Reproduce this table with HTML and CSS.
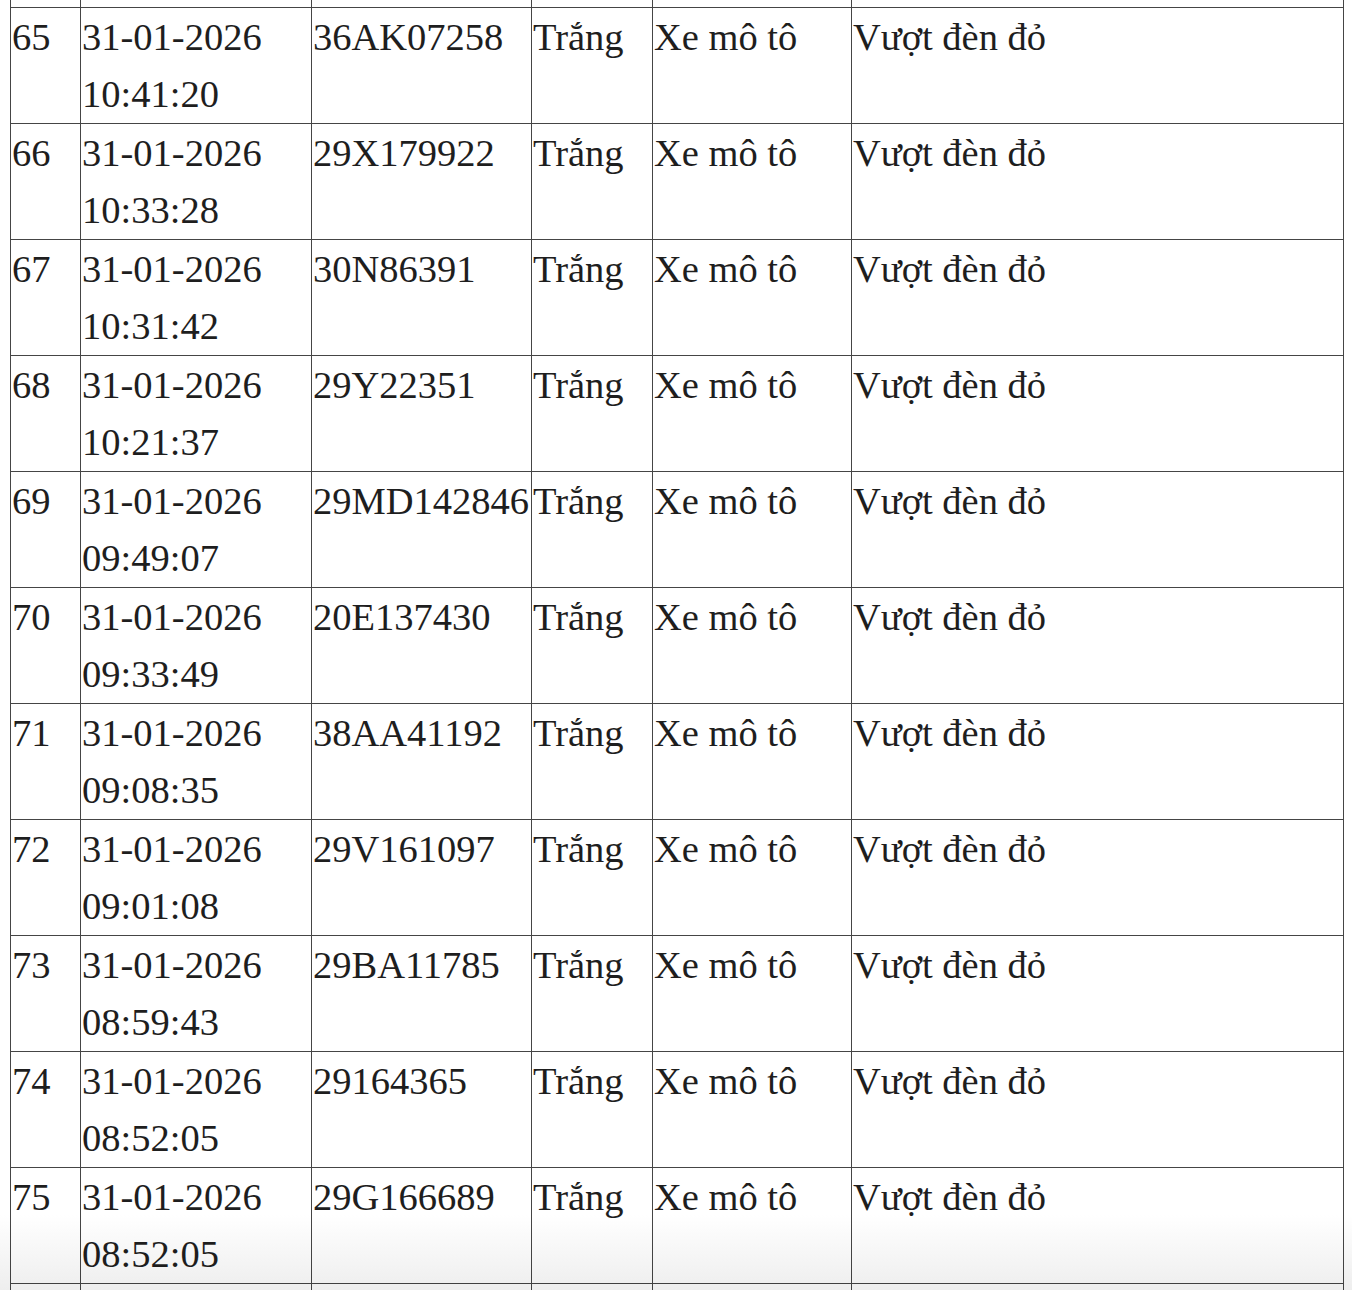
FILE: index.html
```html
<!DOCTYPE html>
<html lang="vi">
<head>
<meta charset="utf-8">
<title>Danh sách vi phạm</title>
<link rel="stylesheet" href="styles.css">
</head>
<body>
<table class="grid">
<colgroup>
<col class="c-no"><col class="c-time"><col class="c-plate"><col class="c-color"><col class="c-type"><col class="c-err">
</colgroup>
<tbody>
<tr class="cut"><td></td><td></td><td></td><td></td><td></td><td></td></tr>
<tr><td><div class="t">65</div></td><td><div class="t">31-01-2026 10:41:20</div></td><td><div class="t">36AK07258</div></td><td><div class="t">Trắng</div></td><td><div class="t">Xe mô tô</div></td><td><div class="t">Vượt đèn đỏ</div></td></tr>
<tr><td><div class="t">66</div></td><td><div class="t">31-01-2026 10:33:28</div></td><td><div class="t">29X179922</div></td><td><div class="t">Trắng</div></td><td><div class="t">Xe mô tô</div></td><td><div class="t">Vượt đèn đỏ</div></td></tr>
<tr><td><div class="t">67</div></td><td><div class="t">31-01-2026 10:31:42</div></td><td><div class="t">30N86391</div></td><td><div class="t">Trắng</div></td><td><div class="t">Xe mô tô</div></td><td><div class="t">Vượt đèn đỏ</div></td></tr>
<tr><td><div class="t">68</div></td><td><div class="t">31-01-2026 10:21:37</div></td><td><div class="t">29Y22351</div></td><td><div class="t">Trắng</div></td><td><div class="t">Xe mô tô</div></td><td><div class="t">Vượt đèn đỏ</div></td></tr>
<tr><td><div class="t">69</div></td><td><div class="t">31-01-2026 09:49:07</div></td><td><div class="t">29MD142846</div></td><td><div class="t">Trắng</div></td><td><div class="t">Xe mô tô</div></td><td><div class="t">Vượt đèn đỏ</div></td></tr>
<tr><td><div class="t">70</div></td><td><div class="t">31-01-2026 09:33:49</div></td><td><div class="t">20E137430</div></td><td><div class="t">Trắng</div></td><td><div class="t">Xe mô tô</div></td><td><div class="t">Vượt đèn đỏ</div></td></tr>
<tr><td><div class="t">71</div></td><td><div class="t">31-01-2026 09:08:35</div></td><td><div class="t">38AA41192</div></td><td><div class="t">Trắng</div></td><td><div class="t">Xe mô tô</div></td><td><div class="t">Vượt đèn đỏ</div></td></tr>
<tr><td><div class="t">72</div></td><td><div class="t">31-01-2026 09:01:08</div></td><td><div class="t">29V161097</div></td><td><div class="t">Trắng</div></td><td><div class="t">Xe mô tô</div></td><td><div class="t">Vượt đèn đỏ</div></td></tr>
<tr><td><div class="t">73</div></td><td><div class="t">31-01-2026 08:59:43</div></td><td><div class="t">29BA11785</div></td><td><div class="t">Trắng</div></td><td><div class="t">Xe mô tô</div></td><td><div class="t">Vượt đèn đỏ</div></td></tr>
<tr><td><div class="t">74</div></td><td><div class="t">31-01-2026 08:52:05</div></td><td><div class="t">29164365</div></td><td><div class="t">Trắng</div></td><td><div class="t">Xe mô tô</div></td><td><div class="t">Vượt đèn đỏ</div></td></tr>
<tr><td><div class="t">75</div></td><td><div class="t">31-01-2026 08:52:05</div></td><td><div class="t">29G166689</div></td><td><div class="t">Trắng</div></td><td><div class="t">Xe mô tô</div></td><td><div class="t">Vượt đèn đỏ</div></td></tr>
<tr class="next"><td></td><td></td><td></td><td></td><td></td><td></td></tr>
</tbody>
</table>
<div class="fade"></div>
</body>
</html>
```
FILE: styles.css
```css
html, body {
  margin: 0;
  padding: 0;
  background: #ffffff;
  overflow: hidden;
}
body {
  padding-left: 10px;
  font-family: "Liberation Serif", "Times New Roman", serif;
  color: #1e1e1e;
}
.grid {
  border-collapse: collapse;
  table-layout: fixed;
  width: 1333px;
  font-size: 38.5px;
  line-height: 57px;
}
.c-no { width: 70px; }
.c-time { width: 231px; }
.c-plate { width: 220px; }
.c-color { width: 121px; }
.c-type { width: 199px; }
.c-err { width: 492px; }
.grid td {
  border: 1px solid #454545;
  padding: 0 0 0 1px;
  vertical-align: top;
}
.t {
  margin-top: 1px;
  height: 114px;
}
.grid td:nth-child(3) .t { white-space: nowrap; }
.grid tr.cut td {
  border-top: none;
  height: 7px;
  padding: 0;
}
.grid tr.next td {
  height: 40px;
  border-bottom: none;
}
.fade {
  position: fixed;
  left: 0;
  right: 0;
  bottom: 0;
  height: 75px;
  background: linear-gradient(to bottom, #ffffff 0%, #eeeeee 100%);
  mix-blend-mode: multiply;
  pointer-events: none;
}
```
